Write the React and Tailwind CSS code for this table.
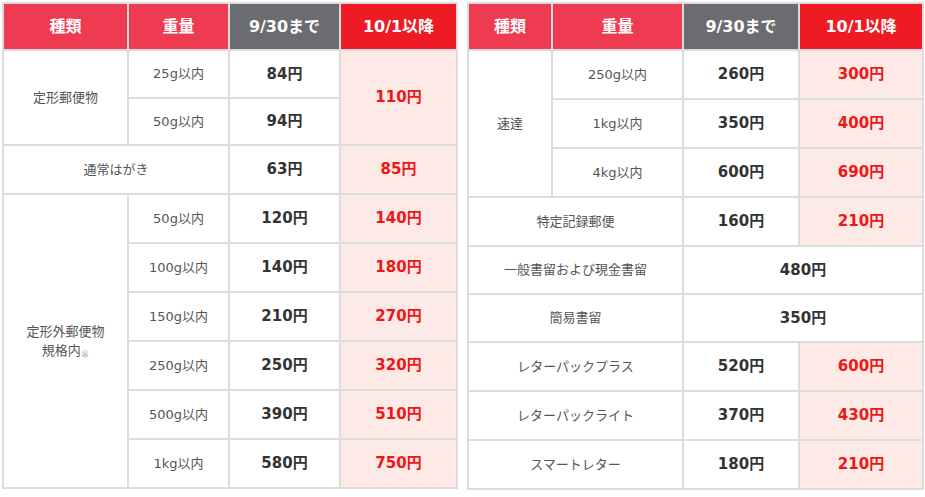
import React from 'react';

const font = { fontFamily: '"DejaVu Sans", "Noto Sans CJK JP", sans-serif' };

const Th = ({ className, children }) => (
  <th className={`border-2 border-[#dcdcdc] text-white text-[16px] font-bold ${className}`}>{children}</th>
);

const Label = ({ children, ...rest }) => (
  <td {...rest} className="border-2 border-[#dcdcdc] bg-white text-[13px] text-[#555] text-center">
    {children}
  </td>
);

const Old = ({ children, ...rest }) => (
  <td {...rest} className="border-2 border-[#dcdcdc] bg-white text-[15px] font-bold text-[#333] text-center">
    {children}
  </td>
);

const New = ({ children, ...rest }) => (
  <td {...rest} className="border-2 border-[#dcdcdc] bg-[#fde9e5] text-[15px] font-bold text-[#f01616] text-center">
    {children}
  </td>
);

const Head = () => (
  <thead>
    <tr className="h-[47px]">
      <Th className="bg-[#ee3b51]">種類</Th>
      <Th className="bg-[#ee3b51]">重量</Th>
      <Th className="bg-[#6b6c70]">9/30まで</Th>
      <Th className="bg-[#ee1b24]">10/1以降</Th>
    </tr>
  </thead>
);

const teikeigai = [
  ['50g以内', '120円', '140円'],
  ['100g以内', '140円', '180円'],
  ['150g以内', '210円', '270円'],
  ['250g以内', '250円', '320円'],
  ['500g以内', '390円', '510円'],
  ['1kg以内', '580円', '750円'],
];

const sokutatsu = [
  ['250g以内', '260円', '300円'],
  ['1kg以内', '350円', '400円'],
  ['4kg以内', '600円', '690円'],
];

const letters = [
  ['レターパックプラス', '520円', '600円'],
  ['レターパックライト', '370円', '430円'],
  ['スマートレター', '180円', '210円'],
];

const LeftTable = () => (
  <table className="table-fixed border-collapse w-[454px]">
    <colgroup>
      <col className="w-[125px]" />
      <col className="w-[101px]" />
      <col className="w-[111px]" />
      <col className="w-[117px]" />
    </colgroup>
    <Head />
    <tbody>
      <tr className="h-[48px]">
        <Label rowSpan={2}>定形郵便物</Label>
        <Label>25g以内</Label>
        <Old>84円</Old>
        <New rowSpan={2}>110円</New>
      </tr>
      <tr className="h-[47px]">
        <Label>50g以内</Label>
        <Old>94円</Old>
      </tr>
      <tr className="h-[49px]">
        <Label colSpan={2}>通常はがき</Label>
        <Old>63円</Old>
        <New>85円</New>
      </tr>
      {teikeigai.map(([w, o, n], i) => (
        <tr key={w} className="h-[49px]">
          {i === 0 && (
            <Label rowSpan={6}>
              定形外郵便物
              <br />
              規格内<sub className="text-[10px] text-[#aaa]">※</sub>
            </Label>
          )}
          <Label>{w}</Label>
          <Old>{o}</Old>
          <New>{n}</New>
        </tr>
      ))}
    </tbody>
  </table>
);

const RightTable = () => (
  <table className="table-fixed border-collapse w-[455px]">
    <colgroup>
      <col className="w-[84px]" />
      <col className="w-[131px]" />
      <col className="w-[116px]" />
      <col className="w-[124px]" />
    </colgroup>
    <Head />
    <tbody>
      {sokutatsu.map(([w, o, n], i) => (
        <tr key={w} className="h-[49px]">
          {i === 0 && <Label rowSpan={3}>速達</Label>}
          <Label>{w}</Label>
          <Old>{o}</Old>
          <New>{n}</New>
        </tr>
      ))}
      <tr className="h-[49px]">
        <Label colSpan={2}>特定記録郵便</Label>
        <Old>160円</Old>
        <New>210円</New>
      </tr>
      <tr className="h-[48px]">
        <Label colSpan={2}>一般書留および現金書留</Label>
        <Old colSpan={2}>480円</Old>
      </tr>
      <tr className="h-[48px]">
        <Label colSpan={2}>簡易書留</Label>
        <Old colSpan={2}>350円</Old>
      </tr>
      {letters.map(([name, o, n]) => (
        <tr key={name} className="h-[49px]">
          <Label colSpan={2}>{name}</Label>
          <Old>{o}</Old>
          <New>{n}</New>
        </tr>
      ))}
    </tbody>
  </table>
);

export default function App() {
  return (
    <div className="w-[925px] h-[497px] bg-white pl-[2px] pt-[2px] flex items-start gap-[9px]" style={font}>
      <LeftTable />
      <RightTable />
    </div>
  );
}
